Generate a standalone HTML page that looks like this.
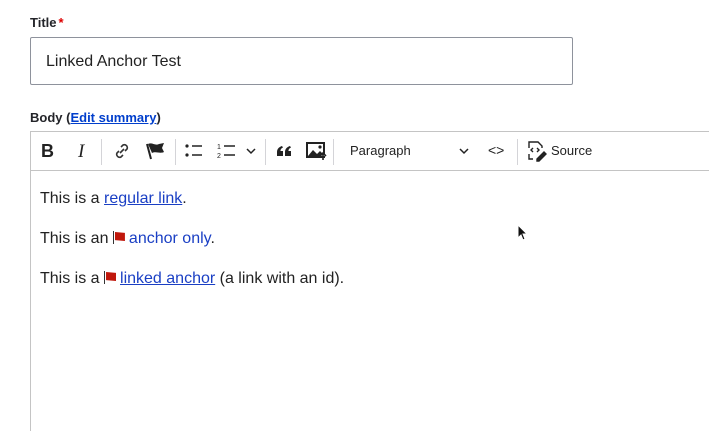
<!DOCTYPE html>
<html><head><style>
body{margin:0;width:709px;height:420px;background:#fff;font-family:"Liberation Sans",sans-serif;color:#222;overflow:hidden;position:relative}
.abs{position:absolute}
.lbl{font-weight:bold;font-size:13px;color:#232429}
.sep{position:absolute;top:139px;width:1px;height:26px;background:#d4d4d8}
.tb{position:absolute;top:131px;left:30px;width:700px;height:40px;border:1px solid #c4c4c4;border-right:none;box-sizing:border-box;background:#fff}
p{margin:0;position:absolute;left:40px;font-size:16px;color:#222}
a{color:#1a3fc4}
.fl{display:inline-block;width:1px;height:13px;background:#333;vertical-align:-1px;margin-right:1px}
.flag{display:inline-block;width:10px;height:9px;background:#c0180c;vertical-align:2px;margin-right:4px;clip-path:polygon(0 0,100% 10%,100% 100%,0 90%)}
</style></head><body>
<div class="abs lbl" style="left:30px;top:15px">Title<span style="color:#d00;margin-left:2px">*</span></div>
<div class="abs" style="left:30px;top:37px;width:543px;height:48px;border:1px solid #8e929c;border-radius:2px;box-sizing:border-box"></div>
<div class="abs" style="left:46px;top:53px;font-size:16px;color:#222">Linked Anchor Test</div>
<div class="abs lbl" style="left:30px;top:110px">Body (<a href="#" style="color:#003ecc">Edit summary</a>)</div>
<div class="tb"></div>
<div class="abs" style="left:30px;top:170px;width:700px;height:260px;border-left:1px solid #c4c4c4;border-top:1px solid #c4c4c4"></div>
<div class="abs" style="left:41px;top:141px;font-weight:bold;font-size:18px">B</div>
<div class="abs" style="left:78px;top:141px;font-family:'Liberation Serif',serif;font-style:italic;font-size:19px">I</div>
<div class="sep" style="left:101px"></div>
<svg class="abs" style="left:113px;top:142px" width="18" height="18" viewBox="0 0 18 18" fill="none" stroke="#333" stroke-width="1.6"><path d="M8 5l2-2a3 3 0 014 4l-2 2M10 13l-2 2a3 3 0 01-4-4l2-2M7 11l4-4"/></svg>
<svg class="abs" style="left:145px;top:141px" width="22" height="20" viewBox="0 0 22 20"><path d="M2 3l4 15" stroke="#222" stroke-width="2"/><path d="M3 3c4-2 7 2 11 0l5-1-2 5 2 4c-4 2-8-1-12 1z" fill="#222"/></svg>
<div class="sep" style="left:175px"></div>
<svg class="abs" style="left:184px;top:143px" width="20" height="16" viewBox="0 0 20 16"><circle cx="3" cy="3" r="1.6" fill="#222"/><circle cx="3" cy="12" r="1.6" fill="#222"/><path d="M8 3h10M8 12h10" stroke="#222" stroke-width="1.5"/></svg>
<svg class="abs" style="left:216px;top:142px" width="22" height="18" viewBox="0 0 22 18"><text x="1" y="7" font-size="7" font-family="Liberation Sans" fill="#222">1</text><text x="1" y="16" font-size="7" font-family="Liberation Sans" fill="#222">2</text><path d="M8 4h11M8 13h11" stroke="#222" stroke-width="1.5"/></svg>
<svg class="abs" style="left:246px;top:147px" width="10" height="8" viewBox="0 0 10 8"><path d="M1 2l4 4 4-4" stroke="#222" stroke-width="1.5" fill="none"/></svg>
<div class="sep" style="left:265px"></div>
<svg class="abs" style="left:276px;top:145px" width="16" height="12" viewBox="0 0 16 12" fill="#222"><path d="M1 11V7c0-3 2-5 5-6l1 1.5C5 3.5 4.5 4.5 4.5 6H7v5zM9 11V7c0-3 2-5 5-6l1 1.5C13 3.5 12.5 4.5 12.5 6H15v5z"/></svg>
<svg class="abs" style="left:306px;top:141px" width="22" height="20" viewBox="0 0 22 20"><rect x="1" y="2" width="17" height="14" fill="none" stroke="#222" stroke-width="2"/><path d="M2 15l5-6 4 4 3-3 3 3v3H2z" fill="#222"/><circle cx="14" cy="6" r="1.6" fill="#222"/><path d="M17 19v-7M14 15l3-3 3 3" stroke="#222" stroke-width="1.6" fill="#fff"/></svg>
<div class="sep" style="left:333px"></div>
<div class="abs" style="left:350px;top:143px;font-size:13px;color:#222">Paragraph</div>
<svg class="abs" style="left:459px;top:147px" width="10" height="8" viewBox="0 0 10 8"><path d="M1 2l4 4 4-4" stroke="#222" stroke-width="1.5" fill="none"/></svg>
<div class="abs" style="left:488px;top:142px;font-size:14px;color:#222">&lt;&gt;</div>
<div class="sep" style="left:517px"></div>
<svg class="abs" style="left:526px;top:140px" width="22" height="22" viewBox="0 0 22 22" fill="none" stroke="#222" stroke-width="1.4"><path d="M3 8V2h9l4 4v2M3 14v5h4"/><path d="M7 8l-2 2 2 2M11 8l2 2-2 2"/><path d="M11 19l7-7 2 2-7 7h-2z" fill="#222"/></svg>
<div class="abs" style="left:551px;top:143px;font-size:13px;color:#222">Source</div>
<p style="top:190px">This is a <a href="#">regular link</a>.</p>
<p style="top:230px">This is an <span class="fl"></span><span class="flag"></span><span style="color:#1a3fc4">anchor only</span>.</p>
<p style="top:270px">This is a <span class="fl"></span><span class="flag"></span><a href="#">linked anchor</a> (a link with an id).</p>
<svg class="abs" style="left:517px;top:224px" width="12" height="18" viewBox="0 0 12 18"><path d="M1 1v13l3-3 2 5 2-1-2-5h4z" fill="#111" stroke="#fff" stroke-width="1"/></svg>
</body></html>
